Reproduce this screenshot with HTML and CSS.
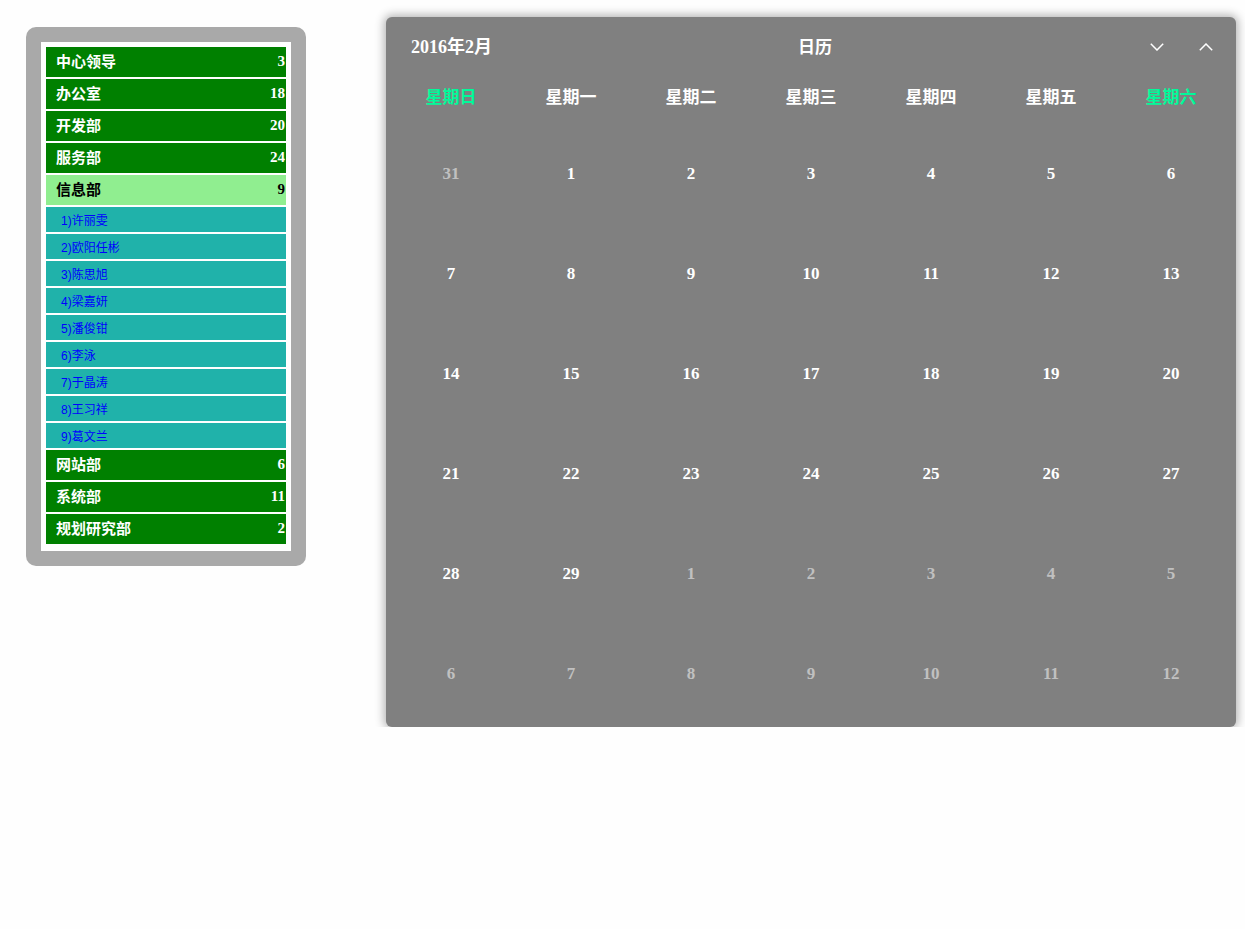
FILE: index.html
```html
<!DOCTYPE html>
<html lang="zh">
<head>
<meta charset="utf-8">
<title>日历</title>
<link rel="stylesheet" href="styles.css">
</head>
<body>
<div class="page">
  <div class="panel">
    <div class="list">
      <div class="group"><span class="label">中心领导</span><span class="num">3</span></div>
      <div class="group"><span class="label">办公室</span><span class="num">18</span></div>
      <div class="group"><span class="label">开发部</span><span class="num">20</span></div>
      <div class="group"><span class="label">服务部</span><span class="num">24</span></div>
      <div class="group active"><span class="label">信息部</span><span class="num">9</span></div>
      <div class="member">1)许丽雯</div>
      <div class="member">2)欧阳任彬</div>
      <div class="member">3)陈思旭</div>
      <div class="member">4)梁嘉妍</div>
      <div class="member">5)潘俊钳</div>
      <div class="member">6)李泳</div>
      <div class="member">7)于晶涛</div>
      <div class="member">8)王习祥</div>
      <div class="member">9)葛文兰</div>
      <div class="group"><span class="label">网站部</span><span class="num">6</span></div>
      <div class="group"><span class="label">系统部</span><span class="num">11</span></div>
      <div class="group"><span class="label">规划研究部</span><span class="num">2</span></div>
    </div>
  </div>

  <div class="calendar">
    <div class="cal-head">
      <div class="month">2016年2月</div>
      <div class="title">日历</div>
      <div class="nav">
        <svg class="chev" width="14" height="8" viewBox="0 0 14 8"><path d="M0.8 0.8 L7 7 L13.2 0.8" fill="none" stroke="#fff" stroke-width="1.5"/></svg>
        <svg class="chev" width="14" height="8" viewBox="0 0 14 8"><path d="M0.8 7.2 L7 1 L13.2 7.2" fill="none" stroke="#fff" stroke-width="1.5"/></svg>
      </div>
    </div>
    <div class="grid">
      <div class="wd weekend">星期日</div>
      <div class="wd">星期一</div>
      <div class="wd">星期二</div>
      <div class="wd">星期三</div>
      <div class="wd">星期四</div>
      <div class="wd">星期五</div>
      <div class="wd weekend">星期六</div>

      <div class="day other">31</div>
      <div class="day">1</div><div class="day">2</div><div class="day">3</div><div class="day">4</div><div class="day">5</div><div class="day">6</div>
      <div class="day">7</div><div class="day">8</div><div class="day">9</div><div class="day">10</div><div class="day">11</div><div class="day">12</div><div class="day">13</div>
      <div class="day">14</div><div class="day">15</div><div class="day">16</div><div class="day">17</div><div class="day">18</div><div class="day">19</div><div class="day">20</div>
      <div class="day">21</div><div class="day">22</div><div class="day">23</div><div class="day">24</div><div class="day">25</div><div class="day">26</div><div class="day">27</div>
      <div class="day">28</div><div class="day">29</div>
      <div class="day other">1</div><div class="day other">2</div><div class="day other">3</div><div class="day other">4</div><div class="day other">5</div>
      <div class="day other">6</div><div class="day other">7</div><div class="day other">8</div><div class="day other">9</div><div class="day other">10</div><div class="day other">11</div><div class="day other">12</div>
    </div>
  </div>
</div>
</body>
</html>
```

FILE: styles.css
```css
html, body {
  margin: 0;
  padding: 0;
  background: #fefefe;
}

body {
  font-family: "Liberation Serif", "Noto Sans CJK SC", serif;
}

.page {
  display: flex;
  align-items: flex-start;
}

.panel {
  margin: 27px 0 0 26px;
  width: 250px;
  padding: 15px;
  background: #a9a9a9;
  border-radius: 10px;
}

.list {
  background: #fff;
  padding: 5px;
}

.group {
  height: 30px;
  margin-bottom: 2px;
  padding: 0 0 0 10px;
  display: flex;
  align-items: center;
  justify-content: space-between;
  background: #008000;
  color: #fff;
  font-weight: bold;
  font-size: 15px;
  line-height: 1;
  font-family: "Liberation Serif", "Noto Sans CJK SC", serif;
}

.group .label {
  padding-top: 1px;
}

.group .num {
  font-size: 15px;
  padding-right: 1px;
  padding-bottom: 2px;
}

.group.active {
  background: #90ee90;
  color: #000;
}

.member {
  height: 25px;
  margin-bottom: 2px;
  padding-left: 15px;
  display: flex;
  align-items: center;
  background: #20b2aa;
  color: #0000ff;
  font-size: 12px;
  font-family: "Liberation Sans", "Noto Sans CJK SC", sans-serif;
}

.calendar {
  margin: 17px 0 0 80px;
  width: 840px;
  padding: 5px;
  background: #808080;
  border-radius: 6px;
  box-shadow: 0 0 10px 2px rgba(0, 0, 0, 0.3);
  color: #fff;
  font-weight: bold;
  font-size: 18px;
  line-height: 1;
}

.cal-head {
  height: 50px;
  display: grid;
  grid-template-columns: 1fr auto 1fr;
  align-items: center;
  padding: 0 18px 0 20px;
}

.month {
  font-size: 18px;
}

.title {
  font-size: 17px;
  padding-left: 6px;
}

.nav {
  display: flex;
  justify-content: flex-end;
  align-items: center;
  gap: 35px;
}

.chev {
  display: block;
}

.grid {
  display: grid;
  grid-template-columns: repeat(7, 120px);
  grid-template-rows: 50px repeat(6, 100px);
}

.wd, .day {
  display: flex;
  align-items: center;
  justify-content: center;
}

.wd {
  font-size: 17px;
}

.wd.weekend {
  color: #00fa9a;
}

.day {
  font-size: 17px;
  padding-top: 3px;
}

.day.other {
  color: #c0c0c0;
}
```
